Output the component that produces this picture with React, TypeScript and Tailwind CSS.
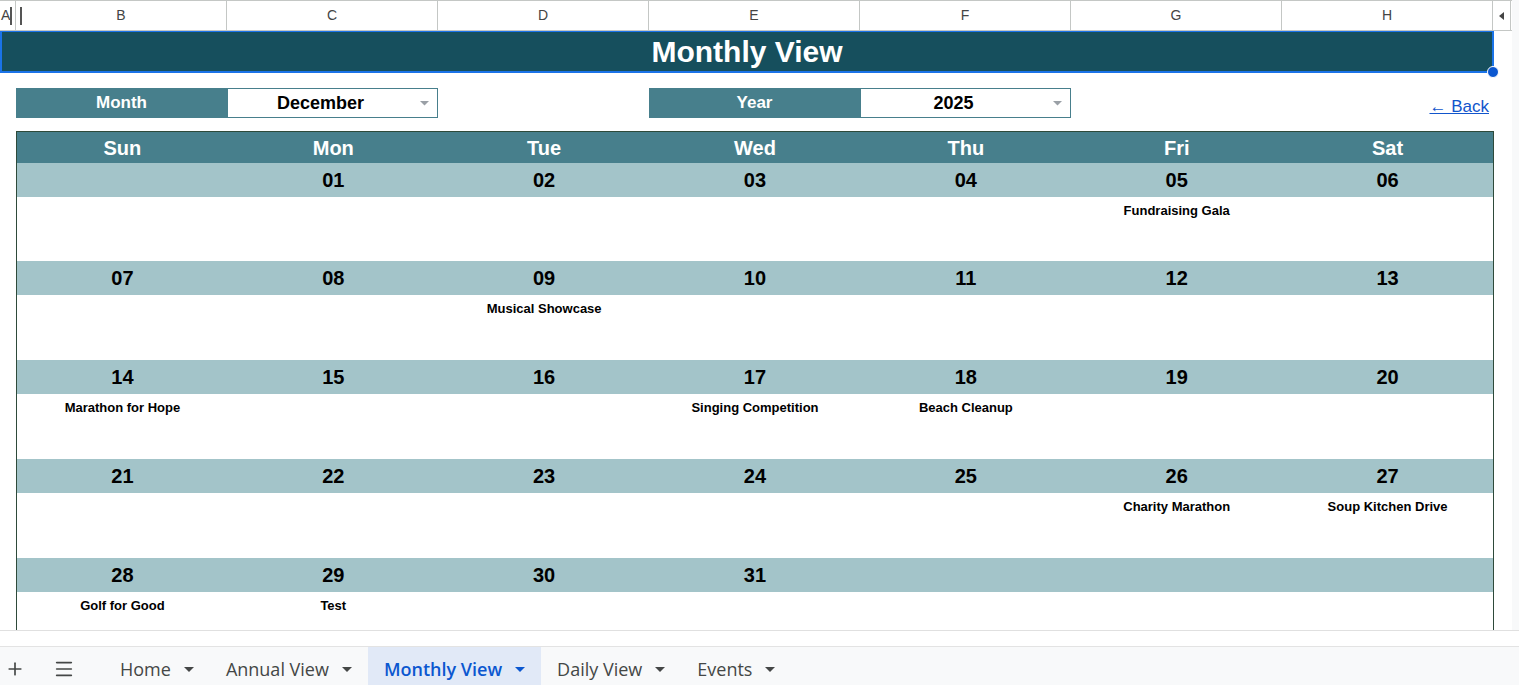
import { Plus, Menu } from "lucide-react"

const cols = ["B", "C", "D", "E", "F", "G", "H"]
const days = ["Sun", "Mon", "Tue", "Wed", "Thu", "Fri", "Sat"]

const events: Record<number, string> = {
  5: "Fundraising Gala",
  9: "Musical Showcase",
  14: "Marathon for Hope",
  17: "Singing Competition",
  18: "Beach Cleanup",
  26: "Charity Marathon",
  27: "Soup Kitchen Drive",
  28: "Golf for Good",
  29: "Test",
}

const weeks: (number | null)[][] = [
  [null, 1, 2, 3, 4, 5, 6],
  [7, 8, 9, 10, 11, 12, 13],
  [14, 15, 16, 17, 18, 19, 20],
  [21, 22, 23, 24, 25, 26, 27],
  [28, 29, 30, 31, null, null, null],
]

const tabs = ["Home", "Annual View", "Monthly View", "Daily View", "Events"]

const Caret = () => (
  <svg width="10" height="6" viewBox="0 0 10 6">
    <path d="M0 0h10L5 5z" fill="currentColor" />
  </svg>
)

const SmallCaret = () => (
  <svg width="9" height="5" viewBox="0 0 9 5">
    <path d="M0 0h9L4.5 4.5z" fill="#9aa0a6" />
  </svg>
)

export default function App() {
  return (
    <div
      className="w-[1519px] h-[685px] overflow-hidden flex flex-col bg-white"
      style={{ fontFamily: '"Liberation Sans", Arial, sans-serif' }}
    >
      {/* sheet area */}
      <div className="h-[630px] shrink-0 flex overflow-hidden">
        <div className="w-[1512px] shrink-0 flex flex-col">
          {/* column headers */}
          <div className="h-[31px] shrink-0 flex border-t border-b border-[#c4c7c5] text-[14px] text-[#444]">
            <div className="w-[16px] relative flex items-center border-r border-[#c4c7c5]">
              <span className="pl-[1px]">A</span>
              <div className="absolute left-[10px] top-[6px] w-[2px] h-[18px] bg-[#555]" />
              <div className="absolute left-[20px] top-[6px] w-[2px] h-[18px] bg-[#555] z-10" />
            </div>
            {cols.map((c) => (
              <div key={c} className="w-[211px] flex items-center justify-center border-r border-[#c4c7c5]">
                {c}
              </div>
            ))}
            <div className="w-[18px] flex items-center justify-center border-r border-[#c4c7c5]">
              <svg width="5" height="8" viewBox="0 0 5 8">
                <path d="M5 0v8L0 4z" fill="#444" />
              </svg>
            </div>
          </div>

          {/* title */}
          <div className="relative shrink-0 w-[1494px] h-[42px] bg-[#164f5d] border-2 border-[#1a73e8] border-t-[1px] flex items-center justify-center">
            <span className="text-white font-bold text-[30px]">Monthly View</span>
            <div className="absolute right-[-7px] bottom-[-7px] w-[12px] h-[12px] rounded-full bg-[#0b57d0] border border-white" />
          </div>

          {/* selectors */}
          <div className="shrink-0 flex items-center pl-[16px] mt-[15px] h-[30px]">
            <div className="w-[211px] h-full bg-[#477f8c] flex items-center justify-center text-white font-bold text-[17px]">
              Month
            </div>
            <div className="w-[211px] h-full border border-[#477f8c] relative flex items-center justify-center pr-[24px] font-bold text-[18px] text-black">
              December
              <div className="absolute right-[8px] top-[12px]">
                <SmallCaret />
              </div>
            </div>
            <div className="w-[211px]" />
            <div className="w-[211px] h-full bg-[#477f8c] flex items-center justify-center text-white font-bold text-[17px]">
              Year
            </div>
            <div className="w-[211px] h-full border border-[#477f8c] relative flex items-center justify-center pr-[24px] font-bold text-[18px] text-black">
              2025
              <div className="absolute right-[8px] top-[12px]">
                <SmallCaret />
              </div>
            </div>
            <div className="w-[418px] flex justify-end pt-[7px]">
              <span className="text-[17px] text-[#1155cc] underline">← Back</span>
            </div>
          </div>

          {/* calendar */}
          <div className="shrink-0 ml-[16px] mt-[13px] w-[1478px] border-l border-r border-t border-[#2e4a3a]">
            <div className="h-[31px] bg-[#477f8c] grid grid-cols-7">
              {days.map((d) => (
                <div key={d} className="flex items-center justify-center text-white font-bold text-[20px]">
                  {d}
                </div>
              ))}
            </div>
            {weeks.map((w, i) => (
              <div key={i}>
                <div className="h-[34px] bg-[#a3c4c9] grid grid-cols-7">
                  {w.map((n, j) => (
                    <div key={j} className="flex items-center justify-center font-bold text-[20px] text-black">
                      {n !== null ? String(n).padStart(2, "0") : ""}
                    </div>
                  ))}
                </div>
                <div className={`${i === 0 ? "h-[64px]" : "h-[65px]"} grid grid-cols-7`}>
                  {w.map((n, j) => (
                    <div key={j} className="pt-[6px] text-center font-bold text-[13px] text-black leading-[16px]">
                      {n !== null && events[n] ? events[n] : ""}
                    </div>
                  ))}
                </div>
              </div>
            ))}
          </div>
        </div>
        <div className="flex-1 bg-[#f8f9fa]" />
      </div>

      {/* bottom */}
      <div className="h-[16px] shrink-0 border-t border-[#e0e0e0] bg-white" />
      <div
        className="flex-1 border-t border-[#e3e3e3] bg-[#f8f9fa] flex items-stretch text-[18px] text-[#444746]"
        style={{ fontFamily: '"Open Sans", Roboto, sans-serif' }}
      >
        <div className="w-[29px] flex items-center justify-center pt-[6px]">
          <Plus className="w-[20px] h-[20px]" strokeWidth={2} />
        </div>
        <div className="w-[70px] flex items-center justify-center pt-[6px]">
          <Menu className="w-[22px] h-[22px]" strokeWidth={1.8} />
        </div>
        <div className="w-[5px]" />
        {tabs.map((t) => {
          const active = t === "Monthly View"
          return (
            <div
              key={t}
              className={`flex items-center pl-[16px] pr-[16px] gap-[13px] pt-[7px] ${
                active ? "bg-[#e1e9f7] text-[#0b57d0] font-semibold" : ""
              }`}
            >
              <span>{t}</span>
              <Caret />
            </div>
          )
        })}
      </div>
    </div>
  )
}
